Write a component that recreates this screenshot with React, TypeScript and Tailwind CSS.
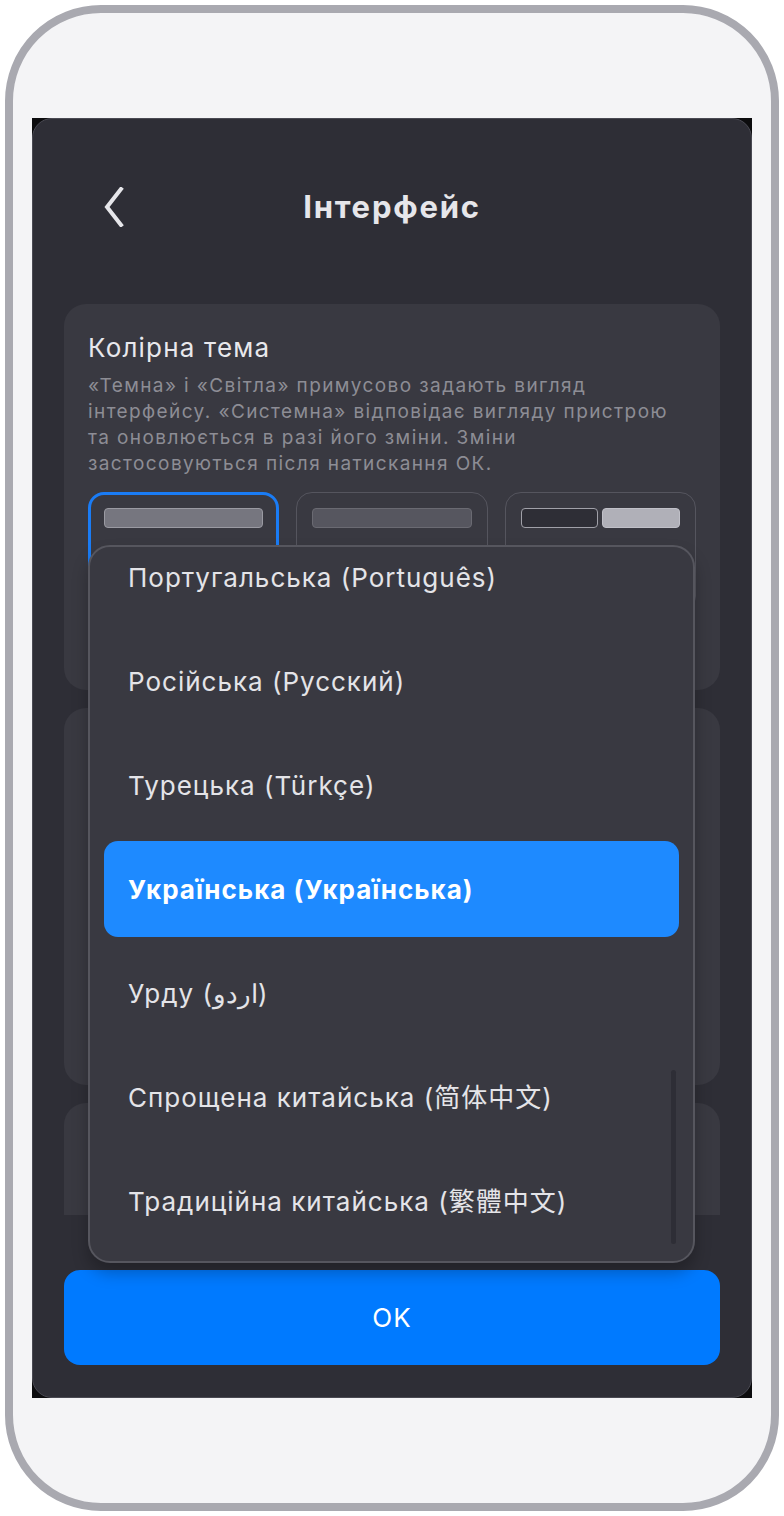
import React from 'react';

const languages = [
    'Португальська (Português)',
    'Російська (Русский)',
    'Турецька (Türkçe)',
    'Українська (Українська)',
    'Урду (اردو)',
    'Спрощена китайська (简体中文)',
    'Традиційна китайська (繁體中文)',
];

const SELECTED = 'Українська (Українська)';

const ChevronLeft: React.FC = () => (
    <svg width="28" height="40" viewBox="0 0 28 40" fill="none" aria-hidden="true">
        <path d="M22 2L8 20l14 18" stroke="#e6e6ea" strokeWidth="4" strokeLinecap="square" />
    </svg>
);

const App: React.FC = () => {
    return (
        <div
            className="w-[784px] h-[1516px] bg-white p-[5px]"
            style={{ fontFamily: 'Inter, "Noto Sans CJK SC", "Noto Sans", sans-serif' }}
        >
            {/* Device frame */}
            <div className="h-full rounded-[96px] border-[8px] border-[#a9a9b0] bg-[#f4f4f6] pt-[105px] px-[19px]">
                <div className="relative bg-[#0c0c0e] h-[1280px]">
                    <div className="h-full rounded-[20px] border border-[#4a4a53] bg-[#2e2e36] flex flex-col">
                        {/* Header */}
                        <div className="h-[185px] flex items-start pt-[64px] px-[66px] relative">
                            <button className="w-[40px] h-[48px] flex items-center">
                                <ChevronLeft />
                            </button>
                            <h1 className="absolute left-0 right-0 top-[65px] text-center text-[31px] tracking-[1.8px] font-bold text-[#e6e6ea] pointer-events-none">
                                Інтерфейс
                            </h1>
                        </div>

                        {/* Scroll content */}
                        <div className="h-[911px] overflow-hidden px-[31px] flex flex-col gap-[18px]">
                            <div className="bg-[#393941] rounded-[22px] px-[24px] pt-[28px] h-[386px] shrink-0">
                                <div className="text-[26px] tracking-[1.2px] text-[#e8e8ec] leading-[32px]">Колірна тема</div>
                                <p className="mt-[9px] text-[19px] leading-[26px] tracking-[1.4px] text-[#8d8d95]">
                                    «Темна» і «Світла» примусово задають вигляд інтерфейсу. «Системна» відповідає вигляду пристрою
                                    та оновлюється в разі його зміни. Зміни
                                    <br />
                                    застосовуються після натискання ОК.
                                </p>
                                <div className="mt-[15px] grid grid-cols-3 gap-[17px]">
                                    <div className="h-[120px] rounded-[16px] border-[3px] border-[#1a7cf5] p-[13px]">
                                        <div className="h-[20px] rounded-[4px] bg-[#76767f] border border-[#9a9aa2]" />
                                    </div>
                                    <div className="h-[120px] rounded-[16px] border border-[#55555e] p-[15px]">
                                        <div className="h-[20px] rounded-[4px] bg-[#56565f] border border-[#6a6a72]" />
                                    </div>
                                    <div className="h-[120px] rounded-[16px] border border-[#55555e] p-[15px] flex gap-[4px]">
                                        <div className="flex-1 h-[20px] rounded-[4px] bg-[#2e2e36] border border-[#a0a0a8]" />
                                        <div className="flex-1 h-[20px] rounded-[4px] bg-[#b0b0b8] border border-[#c0c0c8]" />
                                    </div>
                                </div>
                            </div>
                            <div className="bg-[#393941] rounded-[22px] h-[377px] shrink-0" />
                            <div className="bg-[#393941] rounded-[22px] h-[377px] shrink-0" />
                        </div>

                        {/* Footer */}
                        <div className="px-[31px] pt-[55px]">
                            <button className="w-full h-[95px] rounded-[16px] bg-[#007aff] text-white text-[26px] tracking-[1px]">
                                OK
                            </button>
                        </div>
                    </div>

                    {/* Language dropdown */}
                    <div className="absolute left-[56px] top-[427px] w-[607px] h-[718px] rounded-[22px] border-2 border-[#56565e] bg-[#393941] shadow-[0_10px_16px_rgba(0,0,0,0.25)] overflow-hidden">
                        <div className="-mt-[18px] px-[14px] flex flex-col gap-[8px]">
                            {languages.map((lang) => {
                                const active = lang === SELECTED;
                                return (
                                    <div
                                        key={lang}
                                        className={`h-[96px] shrink-0 rounded-[14px] px-[24px] flex items-center text-[26px] tracking-[1px] ${
                                            active ? 'bg-[#1e8aff] text-white font-bold' : 'text-[#e4e4e8]'
                                        }`}
                                    >
                                        {lang}
                                    </div>
                                );
                            })}
                        </div>
                        <div className="absolute right-[17px] top-[523px] w-[5px] h-[174px] bg-[#2e2e36] rounded-full" />
                    </div>
                </div>
            </div>
        </div>
    );
};

export default App;
